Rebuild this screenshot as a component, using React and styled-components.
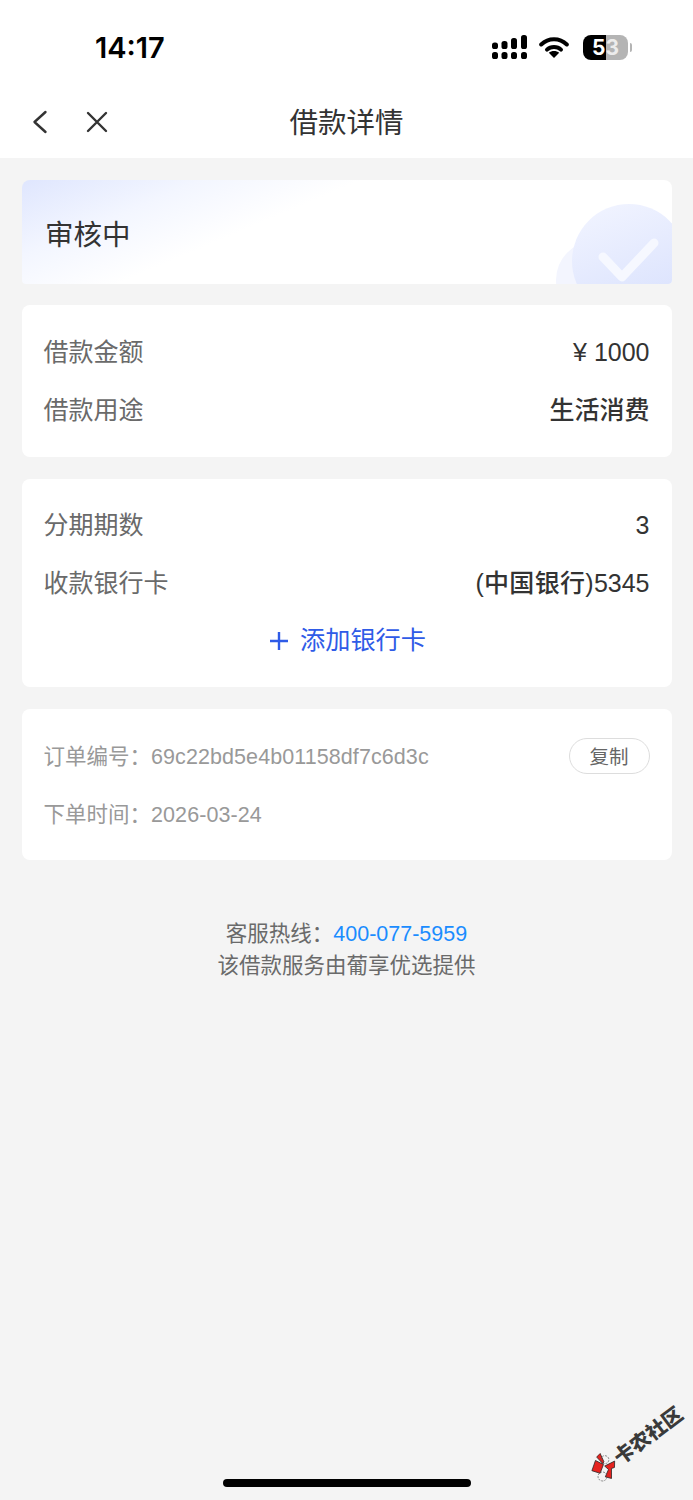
import React from "react";
import styled, { createGlobalStyle } from "styled-components";

const CJK = `"Liberation Sans", "Noto Sans CJK SC", sans-serif`;

const GlobalStyle = createGlobalStyle`
  * {
    box-sizing: border-box;
  }
  body {
    margin: 0;
    background: #f4f4f4;
    font-family: ${CJK};
  }
`;

const App = () => (
  <Page>
    <GlobalStyle />
    <Header>
      <StatusBar>
        <Time>14:17</Time>
        <StatusIcons>
          <svg width="36" height="24" viewBox="0 0 36 24" fill="#000">
            <rect x="0" y="7.5" width="6" height="6.5" rx="2.6" />
            <rect x="9.5" y="6" width="6" height="8" rx="2.6" />
            <rect x="19" y="3" width="6" height="11" rx="2.6" />
            <rect x="29" y="0" width="6" height="14" rx="2.6" />
            <rect x="0" y="17" width="6" height="7" rx="2.6" />
            <rect x="9.5" y="17" width="6" height="7" rx="2.6" />
            <rect x="19" y="17" width="6" height="7" rx="2.6" />
            <rect x="29" y="17" width="6" height="7" rx="2.6" />
          </svg>
          <svg width="30" height="22" viewBox="0 0 30 22">
            <path d="M2.2 8.5C9.5 1.5 20.5 1.5 27.8 8.5" fill="none" stroke="#000" strokeWidth="4" strokeLinecap="round" />
            <path d="M8 13.6C11.8 10 18.2 10 22 13.6" fill="none" stroke="#000" strokeWidth="4" strokeLinecap="round" />
            <path d="M15 22L9.8 16.8C12.5 14.4 17.5 14.4 20.2 16.8Z" fill="#000" />
          </svg>
          <Battery>
            <span>5</span>
            <BatteryRest>3</BatteryRest>
          </Battery>
        </StatusIcons>
      </StatusBar>
      <NavBar>
        <NavIcons>
          <svg width="16" height="24" viewBox="0 0 16 24" fill="none" stroke="#333" strokeWidth="2.4" strokeLinecap="round" strokeLinejoin="round">
            <path d="M13.5 2L2.5 12L13.5 22" />
          </svg>
          <svg width="22" height="22" viewBox="0 0 22 22" fill="none" stroke="#333" strokeWidth="2.4" strokeLinecap="round">
            <path d="M2 2L20 20M20 2L2 20" />
          </svg>
        </NavIcons>
        <NavTitle>借款详情</NavTitle>
      </NavBar>
    </Header>

    <Content>
      <Banner>
        <BannerTitle>审核中</BannerTitle>
        <BannerArt width="116" height="104" viewBox="0 0 116 104">
          <defs>
            <linearGradient id="disc" x1="0.3" y1="0" x2="0.7" y2="1">
              <stop offset="0" stopColor="#f0f3ff" />
              <stop offset="1" stopColor="#d9e1fd" />
            </linearGradient>
          </defs>
          <circle cx="39" cy="100" r="39" fill="#f3f5fe" />
          <circle cx="73" cy="81" r="57" fill="url(#disc)" />
          <path d="M47 77L66 97L98 63" fill="none" stroke="#f6f8ff" strokeWidth="9" strokeLinecap="round" strokeLinejoin="round" />
        </BannerArt>
      </Banner>

      <Card>
        <Row>
          <Label>借款金额</Label>
          <Value>¥ 1000</Value>
        </Row>
        <Row>
          <Label>借款用途</Label>
          <Value $strong $cjk>生活消费</Value>
        </Row>
      </Card>

      <BankCard>
        <Row>
          <Label>分期期数</Label>
          <Value>3</Value>
        </Row>
        <Row>
          <Label>收款银行卡</Label>
          <Value $cjk><BankName>(中国银行)</BankName>5345</Value>
        </Row>
        <AddCard>
          <svg width="18" height="18" viewBox="0 0 18 18" stroke="#2f5be7" strokeWidth="2.4">
            <path d="M9 0V18M0 9H18" />
          </svg>
          <AddText>添加银行卡</AddText>
        </AddCard>
      </BankCard>

      <OrderCard>
        <OrderRow>
          <OrderText>订单编号：<Hash>69c22bd5e4b01158df7c6d3c</Hash></OrderText>
          <CopyButton>复制</CopyButton>
        </OrderRow>
        <OrderRow>
          <OrderText>下单时间：<Hash>2026-03-24</Hash></OrderText>
        </OrderRow>
      </OrderCard>

      <Footer>
        <div>客服热线：<Phone>400-077-5959</Phone></div>
        <div>该借款服务由葡享优选提供</div>
      </Footer>
    </Content>

    <HomeBar />

    <Watermark>
      <svg width="28" height="28" viewBox="0 0 28 28">
        <path d="M2 9L11 3L15 11L7 16Z" fill="#e5231f" stroke="#222" strokeWidth="0.7" />
        <path d="M14 1L19 0L17 9L15 10Z" fill="#e5231f" stroke="#222" strokeWidth="0.7" />
        <path d="M15 13L26 15L22 20L19 19L13 27L9 22L16 18Z" fill="#e5231f" stroke="#222" strokeWidth="0.7" />
        <circle cx="19" cy="8" r="4" fill="none" stroke="#555" strokeWidth="0.6" strokeDasharray="2 1" />
        <circle cx="7" cy="20" r="4.5" fill="none" stroke="#555" strokeWidth="0.6" strokeDasharray="2 1" />
      </svg>
      <WatermarkText>卡农社区</WatermarkText>
    </Watermark>
  </Page>
);

const Page = styled.div`
  position: relative;
  display: flex;
  flex-direction: column;
  width: 693px;
  height: 1500px;
  overflow: hidden;
  background: #f4f4f4;
`;

const Header = styled.div`
  background: #fff;
`;

const StatusBar = styled.div`
  display: flex;
  align-items: center;
  justify-content: space-between;
  height: 86px;
  padding: 8px 61px 0 95px;
`;

const Time = styled.div`
  font-family: Inter, sans-serif;
  font-size: 29px;
  font-weight: 600;
  color: #000;
`;

const StatusIcons = styled.div`
  display: flex;
  align-items: center;
  gap: 11px;
`;

const Battery = styled.div`
  position: relative;
  display: flex;
  align-items: center;
  justify-content: center;
  width: 45px;
  height: 25px;
  border-radius: 8px;
  margin-left: 3px;
  margin-right: 4px;
  background: linear-gradient(90deg, #000 0 51%, #b4b4b4 51% 100%);
  color: #fff;
  font-family: Inter, sans-serif;
  font-size: 21px;
  font-weight: 700;

  &::after {
    content: "";
    position: absolute;
    right: -4px;
    top: 8px;
    width: 2.5px;
    height: 9px;
    border-radius: 0 2px 2px 0;
    background: #b4b4b4;
  }
`;

const BatteryRest = styled.span`
  color: #ececec;
`;

const NavBar = styled.div`
  position: relative;
  display: flex;
  align-items: center;
  justify-content: center;
  height: 72px;
`;

const NavIcons = styled.div`
  position: absolute;
  left: 32px;
  top: 24px;
  display: flex;
  align-items: center;
  gap: 38px;
`;

const NavTitle = styled.div`
  margin-top: -4px;
  font-size: 28.5px;
  color: #333;
`;

const Content = styled.div`
  display: flex;
  flex-direction: column;
  gap: 22px;
  padding: 22px 21.5px 0;
`;

const Banner = styled.div`
  position: relative;
  display: flex;
  align-items: center;
  height: 104px;
  margin-bottom: -1px;
  padding: 0 0 0 23.5px;
  overflow: hidden;
  border-radius: 8px 8px 4px 4px;
  background: linear-gradient(157deg, #dfe6fe 0%, #f3f6ff 20%, #fff 38%);
`;

const BannerTitle = styled.div`
  font-size: 28.5px;
  color: #333;
`;

const BannerArt = styled.svg`
  position: absolute;
  right: 0;
  top: 0;
`;

const Card = styled.div`
  padding: 18px 22px;
  border-radius: 8px;
  background: #fff;
`;

const BankCard = styled(Card)`
  padding: 17px 22px 18px;
`;

const Row = styled.div`
  display: flex;
  align-items: center;
  justify-content: space-between;
  height: 58px;
`;

const Label = styled.div`
  margin-top: -5px;
  font-size: 25px;
  color: #6a6a6a;
`;

const Value = styled.div`
  margin-top: ${(p) => (p.$cjk ? "-5px" : "0")};
  font-size: 25px;
  color: #333;
  font-weight: ${(p) => (p.$strong ? 500 : 400)};
`;

const BankName = styled.span`
  font-weight: 500;
  letter-spacing: 0.3px;
`;

const AddCard = styled.div`
  display: flex;
  align-items: center;
  justify-content: center;
  gap: 12px;
  height: 57px;
  padding-left: 3px;
`;

const AddText = styled.span`
  margin-top: -5px;
  font-size: 25.2px;
  color: #2f5be7;
`;

const OrderCard = styled(Card)`
  padding: 19px 22px 16px;
`;

const OrderRow = styled.div`
  display: flex;
  align-items: center;
  justify-content: space-between;
  height: 58px;
`;

const OrderText = styled.div`
  margin-top: -6px;
  font-size: 21.5px;
  color: #999;
`;

const Hash = styled.span`
  letter-spacing: 0.08px;
`;

const CopyButton = styled.div`
  display: flex;
  align-items: center;
  justify-content: center;
  width: 81px;
  height: 36px;
  margin-top: -2px;
  padding-bottom: 2px;
  border: 1px solid #ddd;
  border-radius: 18px;
  font-size: 19.5px;
  color: #666;
`;

const Footer = styled.div`
  margin-top: 36px;
  font-size: 21.5px;
  line-height: 32px;
  text-align: center;
  color: #6a6a6a;
`;

const Phone = styled.span`
  color: #1a8cff;
`;

const HomeBar = styled.div`
  flex: none;
  align-self: center;
  width: 248px;
  height: 8px;
  margin-top: auto;
  margin-bottom: 13px;
  border-radius: 4px;
  background: #000;
`;

const Watermark = styled.div`
  position: absolute;
  left: 593px;
  top: 1461px;
  display: flex;
  align-items: center;
  gap: 0;
  transform: rotate(-37deg);
  transform-origin: left center;
  white-space: nowrap;
`;

const WatermarkText = styled.span`
  font-family: "Noto Sans CJK SC", sans-serif;
  font-size: 20px;
  font-weight: 900;
  color: #3a3a3a;
`;

export default App;
